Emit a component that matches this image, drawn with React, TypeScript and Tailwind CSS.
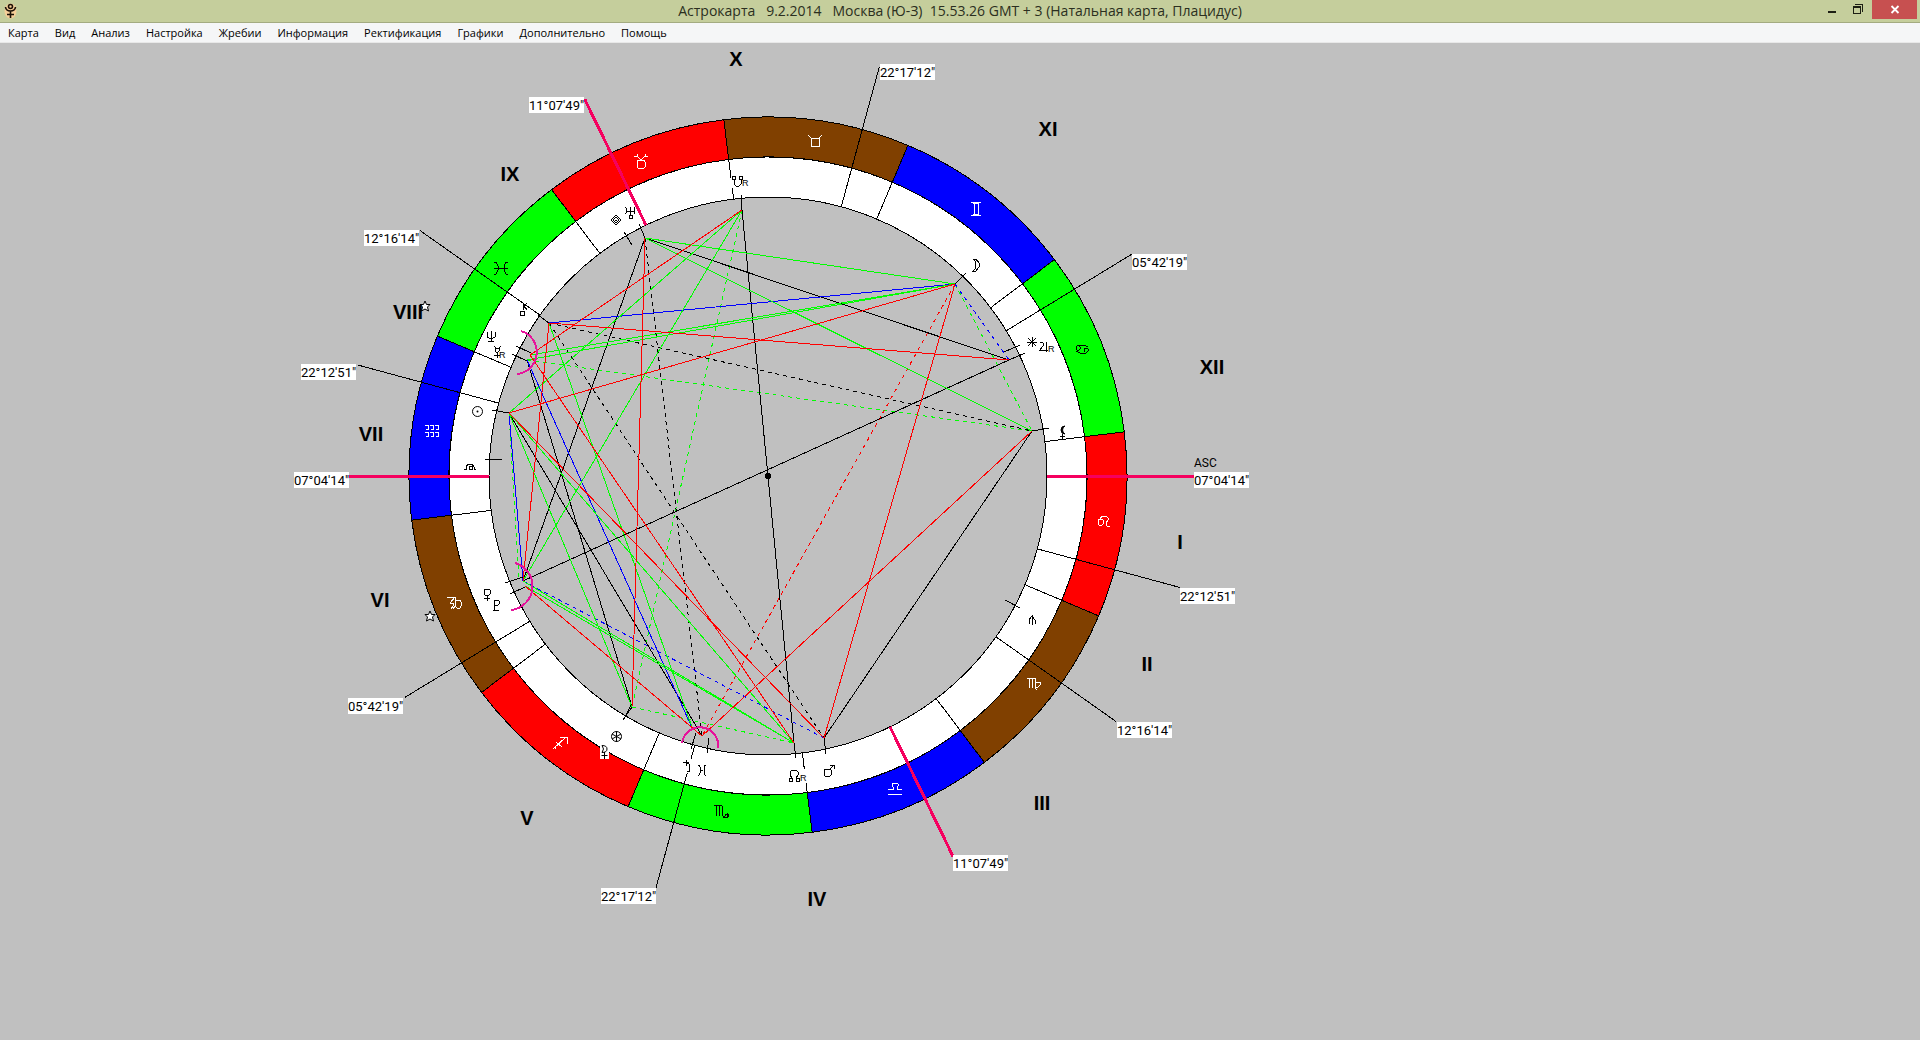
import React from 'react';

const MENU_ITEMS = [
  'Карта',
  'Вид',
  'Анализ',
  'Настройка',
  'Жребии',
  'Информация',
  'Ректификация',
  'Графики',
  'Дополнительно',
  'Помощь',
];

const CX = 768;
const CY = 476;
const R_OUTER = 359;
const R_MIDDLE = 319;
const R_INNER = 279;

const RED = '#ff0000';
const GREEN = '#00ff00';
const BLUE = '#0000ff';
const BROWN = '#804000';
const BLACK = '#000000';

// Cancer / Leo border, degrees counter-clockwise from the ascendant
const LEO_START = 7.07;

// Counter-clockwise from Leo's upper border
const SIGN_COLORS = [GREEN, BLUE, BROWN, RED, GREEN, BLUE, BROWN, RED, GREEN, BLUE, BROWN, RED];

const polar = (deg: number, r: number) => {
  const a = (deg * Math.PI) / 180;
  return { x: CX + r * Math.cos(a), y: CY - r * Math.sin(a) };
};

const sectorPath = (from: number, to: number) => {
  const a = polar(from, R_OUTER);
  const b = polar(to, R_OUTER);
  const c = polar(to, R_MIDDLE);
  const d = polar(from, R_MIDDLE);
  return `M${a.x} ${a.y} A${R_OUTER} ${R_OUTER} 0 0 0 ${b.x} ${b.y} L${c.x} ${c.y} A${R_MIDDLE} ${R_MIDDLE} 0 0 1 ${d.x} ${d.y} Z`;
};

interface Cusp {
  angle: number;
  length: number;
  label: string;
  x: number;
  y: number;
  axis?: boolean;
}

const CUSPS: Cusp[] = [
  { angle: 0, length: 426, label: '07°04\'14"', x: 1194, y: 472, axis: true },
  { angle: 31.37, length: 426, label: '05°42\'19"', x: 1132, y: 254 },
  { angle: 74.78, length: 424, label: '22°17\'12"', x: 880, y: 64 },
  { angle: 115.94, length: 419, label: '11°07\'49"', x: 529, y: 97, axis: true },
  { angle: 144.8, length: 426, label: '12°16\'14"', x: 364, y: 230 },
  { angle: 164.86, length: 425, label: '22°12\'51"', x: 301, y: 364 },
  { angle: 180, length: 420, label: '07°04\'14"', x: 294, y: 472, axis: true },
  { angle: 211.37, length: 425, label: '05°42\'19"', x: 348, y: 698 },
  { angle: 254.78, length: 427, label: '22°17\'12"', x: 601, y: 888 },
  { angle: 295.94, length: 423, label: '11°07\'49"', x: 953, y: 855, axis: true },
  { angle: 324.8, length: 426, label: '12°16\'14"', x: 1117, y: 722 },
  { angle: 344.86, length: 427, label: '22°12\'51"', x: 1180, y: 588 },
];

const HOUSES = [
  { name: 'I', x: 1180, y: 549 },
  { name: 'II', x: 1147, y: 671 },
  { name: 'III', x: 1042, y: 810 },
  { name: 'IV', x: 817, y: 906 },
  { name: 'V', x: 527, y: 825 },
  { name: 'VI', x: 380, y: 607 },
  { name: 'VII', x: 371, y: 441 },
  { name: 'VIII', x: 408, y: 319 },
  { name: 'IX', x: 510, y: 181 },
  { name: 'X', x: 736, y: 66 },
  { name: 'XI', x: 1048, y: 136 },
  { name: 'XII', x: 1212, y: 374 },
];

// Aspect ends on the inner circle
const P = {
  southNode: [742, 210],
  uranus: [645, 238],
  chiron: [549, 323],
  neptune: [530, 355],
  mercury: [527, 360],
  sun: [509, 413],
  venus: [523, 581],
  venusOuter: [519, 581],
  pluto: [525, 586],
  wheel: [632, 707],
  saturn: [693, 730],
  vesta: [702, 736],
  northNode: [794, 743],
  mars: [824, 738],
  moon: [955, 284],
  jupiter: [1009, 360],
  lilith: [1032, 431],
};

type Point = keyof typeof P;

const ASPECTS: [Point, Point, string, boolean?][] = [
  ['sun', 'venusOuter', GREEN, true],
  ['southNode', 'wheel', GREEN, true],
  ['mercury', 'lilith', GREEN, true],
  ['wheel', 'northNode', GREEN, true],
  ['moon', 'lilith', GREEN, true],
  ['uranus', 'vesta', BLACK, true],
  ['chiron', 'lilith', BLACK, true],
  ['chiron', 'mars', BLACK, true],
  ['venus', 'mars', BLUE, true],
  ['moon', 'jupiter', BLUE, true],
  ['moon', 'vesta', RED, true],
  ['southNode', 'northNode', BLACK],
  ['venus', 'jupiter', BLACK],
  ['uranus', 'jupiter', BLACK],
  ['uranus', 'venus', BLACK],
  ['mercury', 'wheel', BLACK],
  ['sun', 'vesta', BLACK],
  ['lilith', 'mars', BLACK],
  ['chiron', 'moon', BLUE],
  ['mercury', 'saturn', BLUE],
  ['sun', 'venus', BLUE],
  ['southNode', 'sun', GREEN],
  ['southNode', 'venus', GREEN],
  ['uranus', 'moon', GREEN],
  ['uranus', 'lilith', GREEN],
  ['chiron', 'saturn', GREEN],
  ['neptune', 'moon', GREEN],
  ['mercury', 'moon', GREEN],
  ['sun', 'northNode', GREEN],
  ['sun', 'wheel', GREEN],
  ['venus', 'northNode', GREEN],
  ['pluto', 'northNode', GREEN],
  ['southNode', 'neptune', RED],
  ['uranus', 'wheel', RED],
  ['chiron', 'jupiter', RED],
  ['chiron', 'venus', RED],
  ['neptune', 'northNode', RED],
  ['sun', 'moon', RED],
  ['sun', 'mars', RED],
  ['pluto', 'vesta', RED],
  ['moon', 'mars', RED],
  ['lilith', 'vesta', RED],
];

const TICKS = [
  [741, 195, 742, 210],
  [639, 224, 645, 238],
  [624, 232, 632, 245],
  [538, 315, 549, 323],
  [516, 346, 531, 353],
  [512, 354, 527, 361],
  [492, 410, 509, 413],
  [485, 459, 502, 460],
  [505, 583, 523, 577],
  [510, 594, 525, 587],
  [623, 720, 632, 707],
  [625, 717, 631, 705],
  [691, 749, 696, 733],
  [707, 753, 709, 738],
  [796, 758, 794, 743],
  [826, 754, 824, 738],
  [955, 284, 966, 273],
  [1004, 352, 1020, 345],
  [1009, 360, 1025, 353],
  [1032, 431, 1049, 428],
  [1005, 600, 1020, 608],
];

const SIGNS = [
  // Aries
  { x: 641, y: 161, color: '#fff', d: 'M-7 -5h3l4 4M-4 -5v-2M7 -5h-3l-4 4M4 -5v-2M-3 -1h6l1 2v5l-1 1h-6l-1 -1v-5z' },
  // Taurus
  { x: 815, y: 141, color: '#fff', d: 'M-7 -6l3 3h8l3 -3M-4 -3v8h8v-8' },
  // Gemini
  { x: 976, y: 208, color: '#fff', d: 'M-5 -6h10M-5 7h10M-3 -5h6M-3 6h6M-2 -6v12M2 -6v12' },
  // Cancer
  { x: 1082, y: 349, color: '#000', d: 'M-6 -2l2 -2h6l4 2M-6 -2v2l1 1h2l1 -1v-2l-1 -1M6 2l-2 2h-6l-4 -2M6 2v-2l-1 -1h-2l-1 1v2l1 1' },
  // Leo
  { x: 1104, y: 521, color: '#fff', d: 'M-6 -1l1 -1h3l1 1v4l-1 1h-3l-1 -1zM-4 -2l2 -3h4l2 2v2l-2 3v2l1 1h3' },
  // Virgo
  { x: 1034, y: 683, color: '#fff', d: 'M-7 -5h2v10M-4 -5h2v10M-1 -5h2v10l2 2M2 -1h4v3l-2 2h-3' },
  // Libra
  { x: 895, y: 789, color: '#fff', d: 'M-7 5h14M-7 0h5v-2l-1 -1v-2l1 -1h4l1 1v2l-1 1v2h5' },
  // Scorpio
  { x: 721, y: 811, color: '#000', d: 'M-7 -6l2 1v10M-5 -5l2 -1l1 1v10M-2 -5l2 -1l1 1v9l2 2l3 -3M6 2v4h-4M4 3h3v3' },
  // Sagittarius
  { x: 560, y: 743, color: '#fff', d: 'M-7 6L6 -6M0 -6h7v7M-4 -1l6 5M-5 3v3' },
  // Capricorn
  { x: 454, y: 603, color: '#fff', d: 'M-7 -6h8M1 -6l-5 6M-4 0h3v3l-2 3M1 -6v9l-2 3M1 -3h5l1 2v4l-1 2h-3l-2 -2' },
  // Aquarius
  { x: 432, y: 430, color: '#fff', d: 'M-7 -5h3v4h-2M-2 -5h3v4h-2M3 -5h3v4h-2M-7 2h3v4h-2M-2 2h3v4h-2M3 2h3v4h-2' },
  // Pisces
  { x: 501, y: 268, color: '#000', d: 'M-7 -6h2l2 4v4l-2 4h-2M7 -6h-2l-2 4v4l2 4h2M-7 0h14' },
];

const PLANETS = [
  { name: 'south node', x: 737, y: 181, d: 'M-5 -5h3v3h-3zM2 -5h3v3h-3zM-3 -2v5l2 2h3l2 -2v-5' },
  { name: 'uranus', x: 630, y: 213, d: 'M-5 -6l1 1v5l-1 1M5 -6l-1 1v5l1 1M-4 -2h8M0 -6v8M-1 2h3v3h-3z' },
  { name: 'amulet', x: 616, y: 220, d: 'M0 -5l5 5l-5 5l-5 -5zM0 -3l3 3l-3 3l-3 -3zM-1 0h2' },
  { name: 'chiron', x: 523, y: 309, d: 'M0 -6v7M0 -2l4 -4M1 -3l3 4M-3 2h4v4h-4z' },
  { name: 'neptune', x: 491, y: 337, d: 'M-4 -5v5l2 1h4l2 -1v-5M0 -6v11M-3 4h6' },
  { name: 'mercury', x: 497, y: 352, d: 'M-3 -6l2 2h3l2 -2M-2 -4v3l1 1h2l1 -1v-3M0 0v6M-3 3h6' },
  { name: 'fate', x: 470, y: 466, d: 'M-6 3h2v-2l2 -3h4l2 3v2h2M-1 0h3v3h-3z' },
  { name: 'venus', x: 487, y: 594, d: 'M-2 -5h4l1 1v4l-1 1h-4l-1 -1v-4zM0 1v6M-3 4h6' },
  { name: 'pluto', x: 496, y: 605, d: 'M-2 5v-10h4l1 1v3l-1 1h-4M-3 5h6' },
  { name: 'saturn', x: 686, y: 765, d: 'M0 -5v6M-3 -3h6M0 0l2 -2l2 2l-1 4v2h-2' },
  { name: 'vesta', x: 702, y: 770, d: 'M-4 -5h1l1 2v6l-1 2h-1M4 -5h-1l-1 2v6l1 2h1M-1 0h2' },
  { name: 'north node', x: 794, y: 776, d: 'M-5 2h3v3h-3zM2 2h3v3h-3zM-2 2l-2 -3v-3l2 -2h4l2 2v3l-2 3' },
  { name: 'mars', x: 829, y: 771, d: 'M-4 -2h5l1 1v5l-1 1h-5l-1 -1v-5zM1 -2l4 -4M1 -6h4v4' },
  { name: 'moon', x: 976, y: 265, d: 'M-3 -6h3l3 4v4l-3 4h-3l2 -2l1 -4l-1 -4z' },
  { name: 'proserpina', x: 1032, y: 342, d: 'M0 -5v10M-5 0h10M-4 -4l8 8M4 -4l-8 8' },
  { name: 'jupiter', x: 1043, y: 347, d: 'M-3 -4l2 -1l1 1v3l-3 4h8M3 -5v10' },
  { name: 'selena', x: 1032, y: 620, d: 'M0 -5v10M-3 4v-4l3 -4l3 4v4' },
];

const RETROGRADE = [
  { x: 742, y: 186 },
  { x: 499, y: 358 },
  { x: 800, y: 781 },
  { x: 1048, y: 352 },
];

const STARS = [
  { x: 425, y: 306 },
  { x: 430, y: 616 },
];

const TitleBar: React.FC = () => (
  <header className="relative flex h-[23px] items-center border-b border-[#a3ab81] bg-[#c5ce9c]">
    <svg viewBox="0 0 13 16" className="absolute left-1 h-4 w-[13px]" fill="none" stroke="#1c1208" aria-hidden="true">
      <ellipse cx="6.5" cy="8" rx="6" ry="7.5" fill="#f6cf98" stroke="none" />
      <circle cx="6.5" cy="3.5" r="2" strokeWidth="1.6" />
      <path d="M1.5 4Q2 8 6.500 8T11.500 4M6.500 8V15M3 11.500H10" strokeWidth="1.6" />
    </svg>
    <h1 className="flex-1 text-center text-[14px] leading-5 whitespace-pre text-[#2b2f20]">
      {'Астрокарта   9.2.2014   Москва (Ю-З)  15.53.26 GMT + 3 (Натальная карта, Плацидус)'}
    </h1>
    <div className="absolute top-0 right-[3px] flex h-[19px]">
      <button type="button" aria-label="Свернуть" className="w-[26px]">
        <svg viewBox="0 0 26 19" className="h-[19px] w-[26px]" aria-hidden="true">
          <path d="M8 11h8v2H8z" fill="#1d1f14" />
        </svg>
      </button>
      <button type="button" aria-label="Развернуть" className="w-[26px]">
        <svg viewBox="0 0 26 19" className="h-[19px] w-[26px]" fill="none" stroke="#1d1f14" shapeRendering="crispEdges" aria-hidden="true">
          <path d="M7.500 6.500h7v7h-7zM7 7.500h8M9 4.500h7.500V12" />
        </svg>
      </button>
      <button type="button" aria-label="Закрыть" className="w-[45px] bg-[#c75050]">
        <svg viewBox="0 0 45 19" className="h-[19px] w-[45px]" stroke="#fff" strokeWidth="1.8" aria-hidden="true">
          <path d="M19.500 6L26.500 13M26.500 6L19.500 13" />
        </svg>
      </button>
    </div>
  </header>
);

const MenuBar: React.FC = () => (
  <nav className="flex h-5 items-center border-b border-[#e8e8e8] bg-[#f5f6f7]">
    {MENU_ITEMS.map((item) => (
      <button key={item} type="button" className="px-2 text-[11px] leading-4 text-black">
        {item}
      </button>
    ))}
  </nav>
);

const Wheel: React.FC = () => (
  <g shapeRendering="crispEdges" stroke="#000">
    <circle cx={CX} cy={CY} r={R_MIDDLE} fill="#fff" />
    {SIGN_COLORS.map((color, i) => (
      <path key={i} d={sectorPath(LEO_START + i * 30, LEO_START + (i + 1) * 30)} fill={color} />
    ))}
    <circle cx={CX} cy={CY} r={R_INNER} fill="#c0c0c0" />
    {SIGN_COLORS.map((_, i) => {
      const a = polar(LEO_START + i * 30, R_INNER);
      const b = polar(LEO_START + i * 30, R_MIDDLE);
      return <line key={i} x1={a.x} y1={a.y} x2={b.x} y2={b.y} />;
    })}
    {CUSPS.map((cusp) => {
      const a = polar(cusp.angle, R_INNER);
      const b = polar(cusp.angle, cusp.length);
      return (
        <line
          key={cusp.angle}
          x1={a.x}
          y1={a.y}
          x2={b.x}
          y2={b.y}
          stroke={cusp.axis ? '#f5005f' : '#000'}
          strokeWidth={cusp.axis ? 3 : 1}
        />
      );
    })}
  </g>
);

const Aspects: React.FC = () => (
  <g shapeRendering="crispEdges" fill="none">
    {ASPECTS.map(([from, to, color, dashed], i) => (
      <line
        key={i}
        x1={P[from][0]}
        y1={P[from][1]}
        x2={P[to][0]}
        y2={P[to][1]}
        stroke={color}
        strokeDasharray={dashed ? '4 4' : undefined}
      />
    ))}
    {TICKS.map(([x1, y1, x2, y2]) => (
      <line key={`${x1}-${y1}`} x1={x1} y1={y1} x2={x2} y2={y2} stroke="#000" />
    ))}
    {/* Conjunctions */}
    <g stroke="#e6149b" strokeWidth="2">
      <path d="M521 331A22 22 0 0 1 517 374" />
      <path d="M515 563A24 24 0 0 1 511 610" />
      <path d="M682 743A18 18 0 0 1 718 748" />
    </g>
    <circle cx={CX} cy={CY} r="3" fill="#000" />
  </g>
);

const Glyphs: React.FC = () => (
  <g fill="none" shapeRendering="crispEdges">
    {/* Blank the cusp lines behind the glyphs that sit on them */}
    <path d="M731 174h16v14h-16zM788 769h18v14h-18zM682 758h9v15h-9zM600 744h9v15h-9z" fill="#fff" />
    {SIGNS.map((sign) => (
      <path key={sign.x} d={sign.d} transform={`translate(${sign.x} ${sign.y})`} stroke={sign.color} />
    ))}
    {PLANETS.map((planet) => (
      <path key={planet.name} d={planet.d} transform={`translate(${planet.x} ${planet.y})`} stroke="#000" />
    ))}
    <g stroke="#000" shapeRendering="auto">
      <circle cx="477.500" cy="411.500" r="5" />
      <circle cx="477.500" cy="411.500" r="1" fill="#000" stroke="none" />
      <circle cx="616.500" cy="736.500" r="5" />
      <path d="M616.500 731v11M612 734l9 5M621 734l-9 5" />
      <path d="M602 745.500q5 0 5 3.500t-5 3.500q3 -3.500 0 -7M604.500 752v7M601.500 755.500h6" />
      <path d="M1065 426a4 4 0 1 0 0 8a4.500 4.500 0 0 1 0 -8zM1062.500 434v5M1060 436.500h5" fill="#000" />
    </g>
    {STARS.map((star) => (
      <path
        key={star.x}
        d="M0 -5l1.500 3.500h3.500l-2.500 2.500l1 4l-3.500 -2l-3.500 2l1 -4l-2.500 -2.500h3.500z"
        transform={`translate(${star.x} ${star.y})`}
        fill="#fff"
        stroke="#000"
        shapeRendering="auto"
      />
    ))}
    {RETROGRADE.map((mark) => (
      <text key={mark.x} x={mark.x} y={mark.y} fill="#000" className="text-[9px]">
        R
      </text>
    ))}
  </g>
);

const Labels: React.FC = () => (
  <g>
    {CUSPS.map((cusp) => (
      <g key={cusp.angle}>
        <rect x={cusp.x} y={cusp.y} width="55" height="16" fill="#fff" />
        <text x={cusp.x} y={cusp.y + 13} className="font-['Roboto',sans-serif] text-[13px]">
          {cusp.label}
        </text>
      </g>
    ))}
    <text x="1194" y="467" className="font-['Roboto',sans-serif] text-[12px]">
      ASC
    </text>
    {HOUSES.map((house) => (
      <text
        key={house.name}
        x={house.x}
        y={house.y}
        textAnchor="middle"
        className="font-['Liberation_Sans',sans-serif] text-[20px] font-bold"
      >
        {house.name}
      </text>
    ))}
  </g>
);

const App: React.FC = () => (
  <div className="flex min-h-screen flex-col bg-[#c0c0c0] font-['Open_Sans',sans-serif]">
    <TitleBar />
    <MenuBar />
    <main className="flex-1 pl-[15%]">
      <svg
        viewBox="288 43 970 870"
        className="block h-[870px] w-[970px] font-['Liberation_Sans',sans-serif]"
        role="img"
        aria-label="Натальная карта"
      >
        <Wheel />
        <Aspects />
        <Glyphs />
        <Labels />
      </svg>
    </main>
  </div>
);

export default App;
